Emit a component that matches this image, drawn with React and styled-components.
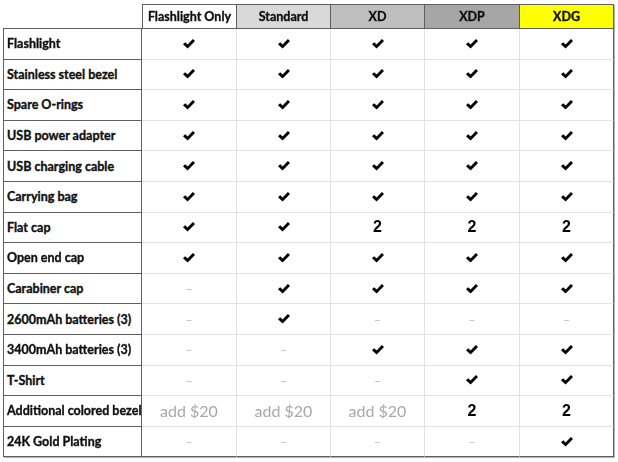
import React from "react";
import styled, { createGlobalStyle } from "styled-components";

const Global = createGlobalStyle`
  html, body { margin: 0; padding: 0; background: #fff; }
  body { font-family: Lato, "Open Sans", sans-serif; }
`;

const DARK = "#5f5f5f";
const LIGHT = "#e2e2e2";

const Page = styled.div`
  width: 618px;
  height: 462px;
  padding: 4px 0 0 3px;
  box-sizing: border-box;
`;

const Grid = styled.div`
  display: grid;
  grid-template-columns: 139px 95px 94px 94px 95px 94px;
  grid-template-rows: 25px repeat(14, 30.6px);
  width: 611px;
  filter: drop-shadow(1px 1px 0 #b5b5b5);
`;

const Corner = styled.div`
  border-bottom: 1px solid ${DARK};
`;

const Head = styled.div`
  display: flex;
  align-items: center;
  justify-content: center;
  background: ${(p) => p.$bg};
  border-top: 1px solid ${DARK};
  border-right: 1px solid ${DARK};
  border-left: ${(p) => (p.$first ? `1px solid ${DARK}` : "none")};
  border-bottom: 1px solid ${DARK};
  font-weight: 700;
  font-size: 12.5px;
  -webkit-text-stroke: 0.35px #111;
  color: #111;
  box-sizing: border-box;
`;

const Label = styled.div`
  display: flex;
  align-items: center;
  padding-left: 3px;
  border-left: 1px solid ${DARK};
  border-right: 1px solid ${DARK};
  border-bottom: 1px solid ${DARK};
  font-weight: 700;
  font-size: 12.5px;
  -webkit-text-stroke: 0.35px #111;
  color: #111;
  white-space: nowrap;
  background: #fff;
  box-sizing: border-box;
`;

const Cell = styled.div`
  display: flex;
  align-items: center;
  justify-content: center;
  background: #fff;
  border-right: 1px solid ${(p) => (p.$lastCol ? DARK : LIGHT)};
  border-bottom: 1px solid ${(p) => (p.$lastRow ? DARK : LIGHT)};
  box-sizing: border-box;
`;

const Num = styled.span`
  font-family: "Liberation Sans", Arial, sans-serif;
  font-weight: 700;
  font-size: 16px;
  color: #000;
`;

const Add = styled.span`
  font-family: Lato, "Open Sans", sans-serif;
  font-size: 16px;
  color: #a8a8a8;
`;

const Dash = styled.span`
  font-size: 12px;
  color: #b8b8b8;
`;

const Check = () => (
  <svg width="12" height="10" viewBox="0 0 12 10">
    <path d="M0 5.2 L2.2 3.2 L4.6 5.4 L9.9 0 L12 2.1 L4.6 9.6 Z" fill="#000" />
  </svg>
);

const headers = [
  { t: "Flashlight Only", bg: "#ffffff" },
  { t: "Standard", bg: "#d9d9d9" },
  { t: "XD", bg: "#bfbfbf" },
  { t: "XDP", bg: "#a6a6a6" },
  { t: "XDG", bg: "#ffff00" },
];

const C = "c";
const D = "d";
const A = "a";
const rows = [
  ["Flashlight", [C, C, C, C, C]],
  ["Stainless steel bezel", [C, C, C, C, C]],
  ["Spare O-rings", [C, C, C, C, C]],
  ["USB power adapter", [C, C, C, C, C]],
  ["USB charging cable", [C, C, C, C, C]],
  ["Carrying bag", [C, C, C, C, C]],
  ["Flat cap", [C, C, "2", "2", "2"]],
  ["Open end cap", [C, C, C, C, C]],
  ["Carabiner cap", [D, C, C, C, C]],
  ["2600mAh batteries (3)", [D, C, D, D, D]],
  ["3400mAh batteries (3)", [D, D, C, C, C]],
  ["T-Shirt", [D, D, D, C, C]],
  ["Additional colored bezel", [A, A, A, "2", "2"]],
  ["24K Gold Plating", [D, D, D, D, C]],
];

const renderValue = (v) => {
  if (v === C) return <Check />;
  if (v === D) return <Dash>–</Dash>;
  if (v === A) return <Add>add $20</Add>;
  return <Num>{v}</Num>;
};

export default function App() {
  return (
    <Page>
      <Global />
      <Grid>
        <Corner />
        {headers.map((h, i) => (
          <Head key={h.t} $bg={h.bg} $first={i === 0}>
            {h.t}
          </Head>
        ))}
        {rows.map(([label, vals], r) => (
          <React.Fragment key={label}>
            <Label>{label}</Label>
            {vals.map((v, c) => (
              <Cell key={c} $lastCol={c === 4} $lastRow={r === rows.length - 1}>
                {renderValue(v)}
              </Cell>
            ))}
          </React.Fragment>
        ))}
      </Grid>
    </Page>
  );
}
